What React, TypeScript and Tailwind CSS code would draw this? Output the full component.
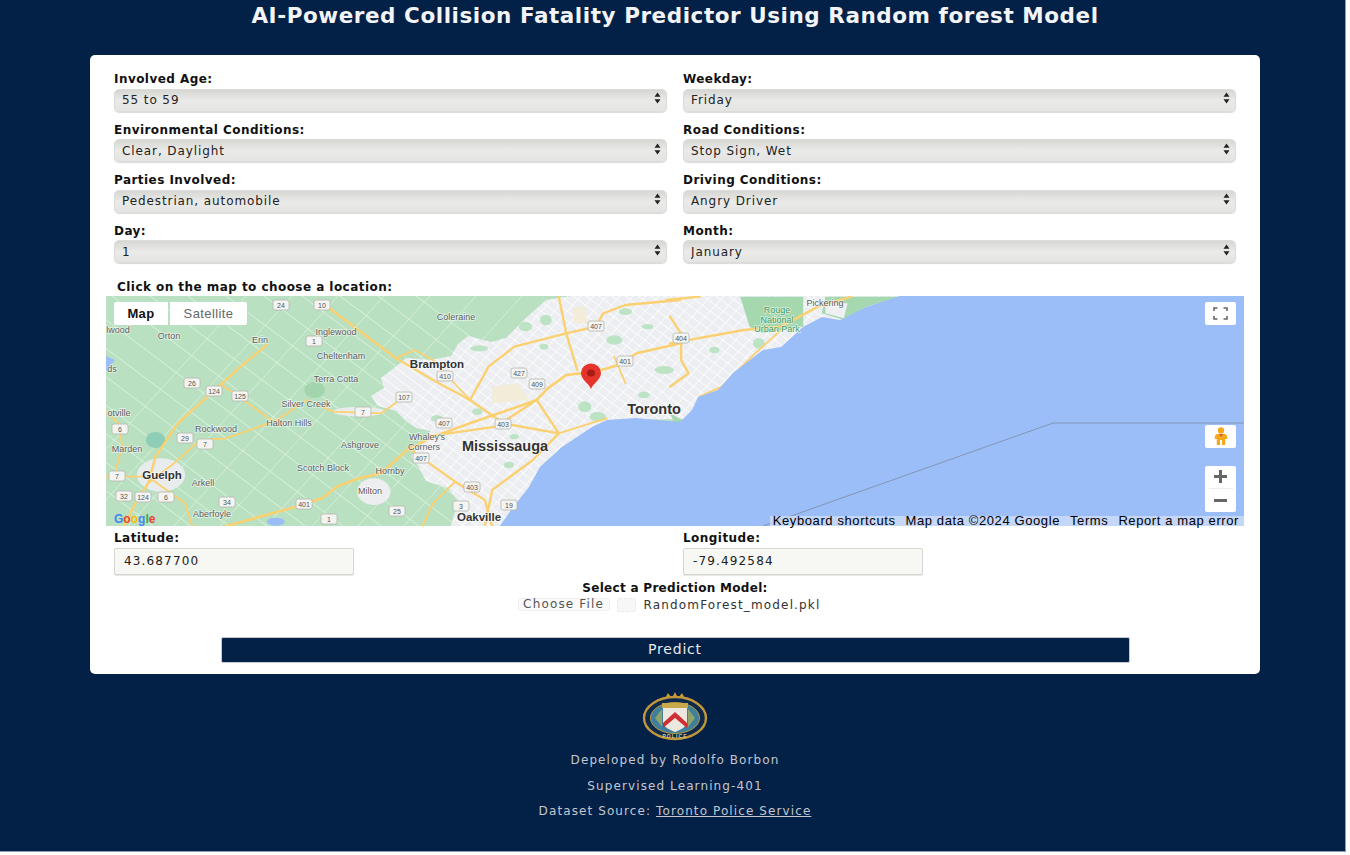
const leftFields = [
  { label: 'Involved Age:', value: '55 to 59' },
  { label: 'Environmental Conditions:', value: 'Clear, Daylight' },
  { label: 'Parties Involved:', value: 'Pedestrian, automobile' },
  { label: 'Day:', value: '1' },
]

const rightFields = [
  { label: 'Weekday:', value: 'Friday' },
  { label: 'Road Conditions:', value: 'Stop Sign, Wet' },
  { label: 'Driving Conditions:', value: 'Angry Driver' },
  { label: 'Month:', value: 'January' },
]

const SelectField = ({ label, value }: { label: string; value: string }) => (
  <div className="h-[50.6px]">
    <label className="block h-[13px] font-['DejaVu_Sans'] text-[12px] leading-[12px] font-bold tracking-[0.45px] text-[#111]">{label}</label>
    <div className="relative h-[23px]">
      <select
        defaultValue={value}
        className="h-full w-full appearance-none rounded-[5px] border border-[#dcdcda] bg-gradient-to-b from-[#d6d6d3] via-[#eaeae8] to-[#e4e4e2] pl-[7px] font-['DejaVu_Sans'] text-[12px] tracking-[0.9px] text-[#222] shadow-[0_1px_1px_rgba(0,0,0,0.15)]"
      >
        <option>{value}</option>
      </select>
      <svg width="7" height="12" viewBox="0 0 7 12" fill="#222" className="pointer-events-none absolute top-[6px] right-[6px]">
        <path d="M3.5 0.5L6.5 4.8H0.5Z M3.5 11.5L0.5 7.2H6.5Z" />
      </svg>
    </div>
  </div>
)

const CoordField = ({ label, value }: { label: string; value: string }) => (
  <div>
    <label className="block h-[18px] font-['DejaVu_Sans'] text-[12px] leading-[16px] font-bold tracking-[0.45px] text-[#111]">{label}</label>
    <input
      readOnly
      value={value}
      className="block h-[27px] w-[240px] rounded-[2px] border border-[#d5d5d2] bg-[#f7f7f3] pl-[9px] font-['DejaVu_Sans'] text-[12px] tracking-[1.15px] text-[#222] shadow-[0_1px_1px_rgba(0,0,0,0.1)]"
    />
  </div>
)

const farmA = Array.from({ length: 16 }, (_, i) => i)
const farmB = Array.from({ length: 14 }, (_, i) => i)
const streetsA = Array.from({ length: 60 }, (_, i) => i)
const streetsB = Array.from({ length: 60 }, (_, i) => i)

// parks inside the built-up area, in crop pixels
const parks = [
  [1205, 90, 16, 16], [1390, 150, 22, 14], [1310, 350, 18, 16], [1525, 240, 26, 12], [1025, 175, 24, 9],
  [1420, 65, 18, 10], [1345, 380, 22, 14], [1470, 315, 16, 10], [1150, 110, 18, 14], [1020, 365, 14, 10],
  [1105, 525, 14, 10], [910, 385, 16, 10], [1200, 170, 12, 9], [1480, 110, 16, 8], [1120, 440, 12, 8],
]

const Road = ({ d, w = 2.4 }: { d: string; w?: number }) => (
  <path d={d} fill="none" stroke="#fbd070" strokeWidth={w} strokeLinejoin="round" strokeLinecap="round" vectorEffect="non-scaling-stroke" />
)

const Shield = ({ x, y, n }: { x: number; y: number; n: string }) => (
  <g>
    <rect x={x - 8} y={y - 5} width={16} height={10} rx={2} fill="#f4f4f2" stroke="#b5b5ad" strokeWidth={0.8} />
    <text x={x} y={y + 2.5} textAnchor="middle" fontSize={7} fill="#555">{n}</text>
  </g>
)

const Label = ({ x, y, t, size = 9, color = '#5c5c5c', bold = false }: { x: number; y: number; t: string; size?: number; color?: string; bold?: boolean }) => (
  <text
    x={x}
    y={y}
    textAnchor="middle"
    fontSize={size}
    fill={color}
    fontWeight={bold ? 700 : 400}
    stroke="#ffffff"
    strokeWidth={bold ? 2 : 1.5}
    strokeOpacity={0.6}
    paintOrder="stroke"
  >
    {t}
  </text>
)

const URBAN =
  'M265 100 L278 92 L275 82 L288 72 L300 62 L325 64 L345 60 L352 48 L362 40 L385 46 L400 42 L420 22 L440 4 L465 0 L800 0 L800 120 L501 124 L456 151 L434 171 L423 191 L394 230 L345 230 L352 205 L342 192 L320 185 L312 170 L305 160 L316 148 L325 135 L310 132 L300 125 L290 115 L272 110Z'

const MapDrawing = () => (
  <svg viewBox="0 0 1138 230" className="block h-full w-full font-['Liberation_Sans']">
    <defs>
      <clipPath id="urban">
        <path d={URBAN} />
      </clipPath>
    </defs>
    <rect width="1138" height="230" fill="#b9e1c1" />
    {/* white back roads across the farmland */}
    {farmA.map((i) => (
      <line key={`a${i}`} x1={-260 + i * 38} y1={0} x2={47 + i * 38} y2={230} stroke="#dff3e1" strokeWidth={0.9} />
    ))}
    {farmB.map((i) => (
      <line key={`b${i}`} x1={-70 + i * 46} y1={230} x2={140 + i * 46} y2={0} stroke="#dff3e1" strokeWidth={0.7} />
    ))}
    {/* built-up area with its street grid */}
    <path d={URBAN} fill="#eceef2" />
    <g clipPath="url(#urban)">
      {streetsA.map((i) => (
        <line key={`sa${i}`} x1={-40 + i * 13} y1={0} x2={267 + i * 13} y2={230} stroke="#ffffff" strokeWidth={0.9} />
      ))}
      {streetsB.map((i) => (
        <line key={`sb${i}`} x1={200 + i * 13} y1={230} x2={410 + i * 13} y2={0} stroke="#ffffff" strokeWidth={0.9} />
      ))}
    </g>
    {/* traced from the crop at left: coordinates are crop pixels */}
    <g transform="translate(-6 -6) scale(0.37 0.3333)">
      <ellipse cx="165" cy="555" rx="65" ry="50" fill="#e9ecee" />
      <ellipse cx="740" cy="605" rx="45" ry="40" fill="#eceef0" />
      <ellipse cx="700" cy="365" rx="70" ry="14" fill="#e9ecee" />
      <path d="M1060 290 L1130 280 L1160 330 L1060 340Z" fill="#f2ecd8" />
      <path d="M1280 50 L1310 50 L1320 100 L1280 100Z" fill="#f2ecd8" />
      <ellipse cx="580" cy="300" rx="28" ry="24" fill="#a3d5ad" />
      {parks.map(([cx, cy, rx, ry]) => (
        <ellipse key={`${cx}-${cy}`} cx={cx} cy={cy} rx={rx} ry={ry} fill="#bde3c5" />
      ))}
      <ellipse cx="150" cy="450" rx="26" ry="24" fill="#8ecdb6" />
      <path d="M0 190 L40 210 L20 240 L0 240Z" fill="#9bbdf8" />
      <ellipse cx="475" cy="695" rx="24" ry="12" fill="#9bbdf8" />
      <Road d="M330 712 L530 650 L600 625 L640 590 L700 565 L760 550 L830 480 L900 440 L1000 400 L1180 330 L1210 295 L1260 255 L1340 245 L1400 225 L1450 190 L1570 160" w={2.6} />
      <Road d="M590 30 L800 205 L900 270 L1000 330 L1090 400 L1240 430" />
      <Road d="M800 205 L850 180 L900 210 L1000 330" w={1.8} />
      <Road d="M1000 330 L1050 230 L1120 170 L1260 130 L1340 110 L1360 70 L1420 45 L1568 30" />
      <Road d="M450 165 L380 230 L300 310 L210 400 L150 500 L130 580 L100 630 L60 720" />
      <Road d="M330 285 L400 340 L470 395 L340 445 L270 450 L200 520 L130 580" w={1.8} />
      <Road d="M470 395 L560 330 L630 365 L760 370 L810 330" w={1.8} />
      <Road d="M880 440 L1070 410 L1180 330 L1240 430 L1170 510 L1060 600 L1040 710" />
      <Road d="M840 480 L960 575 L1040 630 L1060 710" />
      <Road d="M960 575 L900 640 L870 712" w={1.8} />
      <Road d="M1240 20 L1260 130 L1290 240" />
      <Road d="M1240 430 L1340 395 L1370 385" w={1.8} />
      <Road d="M1390 200 L1420 280" w={1.8} />
      <Road d="M0 350 L50 400 L60 470 L40 550" w={1.8} />
      <Road d="M0 560 L130 560 L230 640 L250 712" w={1.8} />
    </g>
    <g transform="translate(564 -6) scale(0.37 0.3333)">
      <path d="M190 20 L360 20 L360 110 L250 130 L215 110Z M420 20 L620 20 L530 50 L470 90 L410 70Z" fill="#a5d8ae" />
      <ellipse cx="240" cy="160" rx="16" ry="16" fill="#bde3c5" />
      <ellipse cx="120" cy="180" rx="14" ry="10" fill="#bde3c5" />
      <path d="M420 40 L480 40 L470 85 L420 70Z" fill="#eef0f3" />
      <Road d="M-10 30 L80 20 M0 160 L200 120 L300 110 L400 50 L490 20" />
      <Road d="M0 80 L30 130 L30 210 L50 250 L0 290" />
      <Road d="M80 320 L140 290 L230 190 L300 120" w={1.8} />
      <path d="M0 370 L50 400 L20 420Z" fill="#a5d8ae" />
    </g>
    {/* lake ontario */}
    <path
      d="M394 230 L405 214 L423 191 L434 171 L456 151 L486 131 L501 124 L530 122 L574 126 L586 114 L592 101 L612 94 L627 77 L657 54 L675 51 L697 31 L716 21 L734 24 L760 11 L794 0 L1138 0 L1138 230Z"
      fill="#9bbdf8"
    />
    <path d="M1138 127 L947 127 L657 230" fill="none" stroke="#8296b4" strokeWidth={1} />
    <Shield x={175} y={9} n="24" />
    <Shield x={216} y={9} n="10" />
    <Shield x={208} y={45} n="1" />
    <Shield x={86} y={87} n="26" />
    <Shield x={108} y={95} n="124" />
    <Shield x={134} y={100} n="125" />
    <Shield x={257} y={116} n="7" />
    <Shield x={298} y={101} n="107" />
    <Shield x={339} y={80} n="410" />
    <Shield x={413} y={77} n="427" />
    <Shield x={431} y={88} n="409" />
    <Shield x={490} y={30} n="407" />
    <Shield x={519} y={65} n="401" />
    <Shield x={338} y={127} n="407" />
    <Shield x={397} y={128} n="403" />
    <Shield x={315} y={162} n="407" />
    <Shield x={366} y={191} n="403" />
    <Shield x={355} y={210} n="3" />
    <Shield x={403} y={209} n="19" />
    <Shield x={291} y={215} n="25" />
    <Shield x={223} y={223} n="1" />
    <Shield x={198} y={208} n="401" />
    <Shield x={121} y={206} n="34" />
    <Shield x={60} y={201} n="6" />
    <Shield x={37} y={201} n="124" />
    <Shield x={18} y={200} n="32" />
    <Shield x={11} y={180} n="7" />
    <Shield x={14} y={133} n="6" />
    <Shield x={79} y={142} n="29" />
    <Shield x={99} y={148} n="7" />
    <Shield x={575} y={42} n="404" />
    <Label x={63} y={43} t="Orton" />
    <Label x={154} y={47} t="Erin" />
    <Label x={230} y={39} t="Inglewood" />
    <Label x={350} y={24} t="Coleraine" />
    <Label x={235} y={63} t="Cheltenham" />
    <Label x={230} y={86} t="Terra Cotta" />
    <Label x={200} y={111} t="Silver Creek" />
    <Label x={183} y={130} t="Halton Hills" />
    <Label x={110} y={136} t="Rockwood" />
    <Label x={254} y={152} t="Ashgrove" />
    <Label x={21} y={156} t="Marden" />
    <Label x={217} y={175} t="Scotch Block" />
    <Label x={284} y={178} t="Hornby" />
    <Label x={264} y={198} t="Milton" />
    <Label x={97} y={190} t="Arkell" />
    <Label x={106} y={221} t="Aberfoyle" />
    <Label x={13} y={120} t="otville" />
    <Label x={6} y={76} t="ds" />
    <Label x={12} y={37} t="lwood" />
    <Label x={56} y={183} t="Guelph" size={11.5} color="#333" bold />
    <Label x={331} y={72} t="Brampton" size={11.5} color="#333" bold />
    <Label x={321} y={144} t="Whaley's" />
    <Label x={318} y={154} t="Corners" />
    <Label x={399} y={155} t="Mississauga" size={14.5} color="#333" bold />
    <Label x={373} y={225} t="Oakville" size={11.5} color="#333" bold />
    <Label x={548} y={118} t="Toronto" size={14.5} color="#333" bold />
    <Label x={671} y={17} t="Rouge" color="#3d9a5c" />
    <Label x={671} y={27} t="National" color="#3d9a5c" />
    <Label x={671} y={36} t="Urban Park" color="#3d9a5c" />
    <Label x={719} y={10} t="Pickering" />
    <text x={8} y={227} fontSize={12} fontWeight={700}>
      <tspan fill="#4285f4">G</tspan>
      <tspan fill="#ea4335">o</tspan>
      <tspan fill="#fbbc05">o</tspan>
      <tspan fill="#4285f4">g</tspan>
      <tspan fill="#34a853">l</tspan>
      <tspan fill="#ea4335">e</tspan>
    </text>
    {/* marker */}
    <path d="M485 93 C483 87 475 84 475 77 A10 9.5 0 0 1 495 77 C495 84 487 87 485 93Z" fill="#e5342b" />
    <ellipse cx="485" cy="77" rx="4" ry="3.5" fill="#a51d15" />
  </svg>
)

const ControlBox = ({ className, children }: { className: string; children?: React.ReactNode }) => (
  <div className={`absolute flex items-center justify-center rounded-[2px] bg-white ${className}`}>{children}</div>
)

const MapPanel = () => (
  <div className="relative ml-[-8px] h-[230px] w-[1138px]">
    <MapDrawing />
    <div className="absolute top-[6px] left-[8px] flex h-[23px] gap-[2px] font-['Liberation_Sans'] text-[13px] leading-[23px] tracking-[0.4px]">
      <div className="w-[54px] rounded-l-[2px] bg-white text-center font-bold text-[#111]">Map</div>
      <div className="w-[77px] rounded-r-[2px] bg-white text-center text-[#666]">Satellite</div>
    </div>
    <ControlBox className="top-[6px] right-[8px] h-[23px] w-[31px]">
      <svg width="15" height="13" viewBox="0 0 15 13" fill="none" stroke="#666" strokeWidth="1.6">
        <path d="M1 4V1H4.5M10.5 1H14V4M14 9V12H10.5M4.5 12H1V9" />
      </svg>
    </ControlBox>
    <ControlBox className="top-[129px] right-[8px] h-[23px] w-[31px]">
      <svg width="14" height="18" viewBox="0 0 14 18" fill="#f5a81c">
        <circle cx="7" cy="3.4" r="3.2" />
        <path d="M3.5 7H10.5C12 7 12.8 8 13 9.5L13.5 12H11.2V18H8V13H6V18H2.8V12H.5L1 9.5C1.2 8 2 7 3.5 7Z" />
        <path d="M5 7H9L7 10Z" fill="#d9542b" />
      </svg>
    </ControlBox>
    <ControlBox className="top-[170px] right-[8px] h-[46px] w-[31px] flex-col">
      <svg width="15" height="15" viewBox="0 0 15 15" fill="#666">
        <path d="M6 1H9V6H14V9H9V14H6V9H1V6H6Z" />
      </svg>
      <div className="my-[4px] h-px w-[24px] bg-[#eee]" />
      <svg width="15" height="15" viewBox="0 0 15 15" fill="#666">
        <path d="M1 6H14V9H1Z" />
      </svg>
    </ControlBox>
    <div className="absolute right-0 bottom-0 flex h-[10px] w-[474px] items-center justify-end gap-[10px] bg-[#dfe8f8]/60 pr-[5px] font-['Liberation_Sans'] text-[13px] leading-[10px] tracking-[0.6px] text-black">
      <span>Keyboard shortcuts</span>
      <span>Map data ©2024 Google</span>
      <span>Terms</span>
      <span>Report a map error</span>
    </div>
  </div>
)

const PoliceBadge = () => (
  <svg width="66" height="50" viewBox="0 0 66 50" className="font-['Liberation_Sans']">
    <path d="M22 9 L26 2 L30 7 L33 1 L36 7 L40 2 L44 9Z" fill="#c79a34" />
    <ellipse cx="33" cy="27" rx="31" ry="21" fill="#0d2a4d" stroke="#c1973a" strokeWidth="2.4" />
    <ellipse cx="33" cy="27" rx="24.5" ry="15.5" fill="#3e7f9e" stroke="#c1973a" strokeWidth="1" />
    <text x="33" y="46.5" textAnchor="middle" fontSize="5" fontWeight="700" fill="#d8c98f">POLICE</text>
    <path d="M21 16 H45 V31 C45 36 38 39 33 41 C28 39 21 36 21 31Z" fill="#ece8df" />
    <path d="M21 32 L33 21 L45 32 V37 L33 27 L21 37Z" fill="#cf2e35" />
    <path d="M20 12 H46 V17 H20Z" fill="#c9a84b" />
    <path d="M13 27 L20 18 V36Z M53 27 L46 18 V36Z" fill="#8fa269" />
  </svg>
)

export default function App() {
  return (
    <div className="h-[855px] w-[1350px] bg-white">
      <div className="flex h-[852px] w-[1346px] flex-col items-center border-r border-b border-[#8d9cb3] bg-[#032047] pl-[5px]">
        <h1 className="mt-[3px] h-[52px] font-['DejaVu_Sans'] text-[21.5px] leading-[26px] font-bold tracking-[0.55px] whitespace-nowrap text-[#f2f4f7]">
          AI-Powered Collision Fatality Predictor Using Random forest Model
        </h1>
        <main className="h-[619px] w-[1170px] rounded-[5px] bg-white px-[24px] pt-[18px]">
          <div className="grid grid-cols-[553px_553px] gap-x-[16px]">
            <div>
              {leftFields.map((f) => (
                <SelectField key={f.label} {...f} />
              ))}
            </div>
            <div>
              {rightFields.map((f) => (
                <SelectField key={f.label} {...f} />
              ))}
            </div>
          </div>
          <p className="mt-[3.5px] h-[17px] pl-[3px] font-['DejaVu_Sans'] text-[12px] leading-[17px] font-bold tracking-[0.45px] text-[#111]">
            Click on the map to choose a location:
          </p>
          <MapPanel />
          <div className="mt-[4px] grid grid-cols-[553px_553px] gap-x-[16px]">
            <CoordField label="Latitude:" value="43.687700" />
            <CoordField label="Longitude:" value="-79.492584" />
          </div>
          <div className="mt-[5px] text-center font-['DejaVu_Sans'] text-[12px] leading-[16px] font-bold tracking-[0.3px] text-[#111]">
            Select a Prediction Model:
          </div>
          <div className="flex h-[18px] items-center justify-center gap-[7.5px] pr-[12px] font-['DejaVu_Sans'] text-[12px] tracking-[1.15px] text-[#333]">
            <button className="h-[13px] w-[92px] rounded-[3px] border border-[#efefef] bg-[#fafafa] text-center leading-[11px] text-[#555]">Choose File</button>
            <span className="h-[14px] w-[19px] rounded-[2px] border border-dashed border-[#e8e8e8] bg-[#f7f7f7]" />
            <span>RandomForest_model.pkl</span>
          </div>
          <button className="mx-auto mt-[23px] block h-[26px] w-[909px] rounded-[2px] border border-[#c5c9d0] bg-[#032047] font-['DejaVu_Sans'] text-[14px] tracking-[0.8px] text-[#e8e9ec]">
            Predict
          </button>
        </main>
        <footer className="mt-[17px] flex flex-col items-center font-['DejaVu_Sans'] text-[12px] tracking-[1.1px] text-[#c3c7cf]">
          <PoliceBadge />
          <p className="mt-[11px] leading-[16px]">Depeloped by Rodolfo Borbon</p>
          <p className="mt-[10px] leading-[16px]">Supervised Learning-401</p>
          <p className="mt-[9px] leading-[16px]">
            Dataset Source: <a className="underline" href="#">Toronto Police Service</a>
          </p>
        </footer>
      </div>
    </div>
  )
}
